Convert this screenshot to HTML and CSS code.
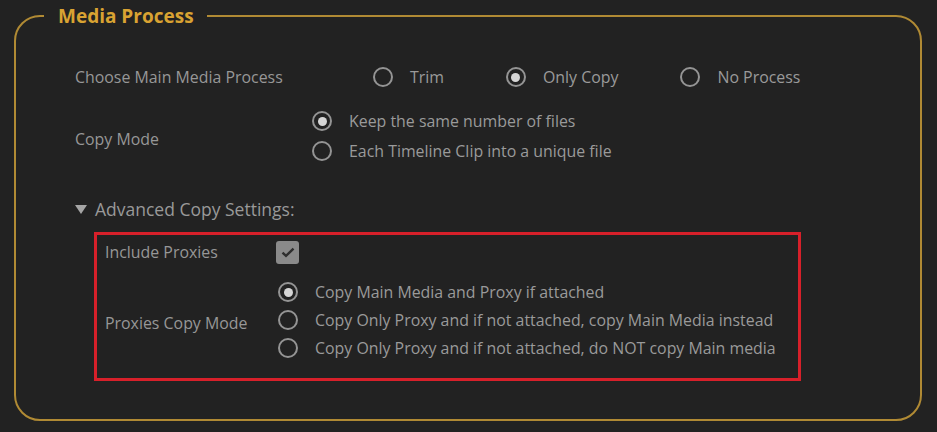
FILE: index.html
```html
<!DOCTYPE html>
<html lang="en">

<head>
    <meta charset="UTF-8">
    <meta name="viewport" content="width=device-width, initial-scale=1.0">
    <title>Media Process</title>
    <link rel="stylesheet" href="styles.css">
</head>

<body>
    <fieldset class="panel">
        <legend>Media Process</legend>

        <div class="main-row">
            <span class="label">Choose Main Media Process</span>
            <div class="radio-line">
                <label class="radio"><span class="dot"></span>Trim</label>
                <label class="radio"><span class="dot on"></span>Only Copy</label>
                <label class="radio"><span class="dot"></span>No Process</label>
            </div>
        </div>

        <div class="copy-row">
            <span class="label copy-label">Copy Mode</span>
            <div class="radio-stack">
                <label class="radio"><span class="dot on"></span>Keep the same number of files</label>
                <label class="radio"><span class="dot"></span>Each Timeline Clip into a unique file</label>
            </div>
        </div>

        <div class="advanced">
            <span class="arrow"></span>Advanced Copy Settings:
        </div>

        <div class="advanced-box">
            <div class="box-row">
                <span class="label">Include Proxies</span>
                <span class="checkbox">
                    <svg width="14" height="11" viewBox="0 0 14 11">
                        <path d="M1.5 5.6 L5 8.9 L12.5 1.6" fill="none" stroke="#2e2e2e" stroke-width="2.4" />
                    </svg>
                </span>
            </div>
            <div class="box-row proxies">
                <span class="label proxies-label">Proxies Copy Mode</span>
                <div class="radio-stack tight">
                    <label class="radio"><span class="dot on"></span>Copy Main Media and Proxy if attached</label>
                    <label class="radio"><span class="dot"></span>Copy Only Proxy and if not attached, copy Main Media instead</label>
                    <label class="radio"><span class="dot"></span>Copy Only Proxy and if not attached, do NOT copy Main media</label>
                </div>
            </div>
        </div>
    </fieldset>
</body>

</html>
```

FILE: styles.css
```css
body {
    margin: 0;
    padding: 4px 15px 0 14px;
    background: #222222;
    font-family: "Open Sans", "Lato", sans-serif;
    font-size: 15.9px;
    color: #9a9a9a;
}

.panel {
    margin: 0;
    height: 417px;
    box-sizing: border-box;
    border: 2px solid #b08a34;
    border-radius: 26px;
    padding: 0 0 0 59px;
}

.panel legend {
    margin-left: -31px;
    padding: 0 13px 0 14px;
    font-size: 19px;
    line-height: 24px;
    font-weight: 700;
    color: #d9a332;
}

.label {
    color: #979797;
}

/* radios */
.radio {
    display: flex;
    align-items: center;
    gap: 17px;
    white-space: nowrap;
}

.dot {
    width: 20px;
    height: 20px;
    box-sizing: border-box;
    border: 2.5px solid #949494;
    border-radius: 50%;
    display: flex;
    align-items: center;
    justify-content: center;
    flex-shrink: 0;
}

.dot.on::after {
    content: "";
    width: 9px;
    height: 9px;
    border-radius: 50%;
    background: #d6d6d6;
}

.main-row {
    display: flex;
    align-items: center;
    height: 30px;
    margin-top: 34px;
}

.main-row .label {
    width: 298px;
}

.radio-line {
    display: flex;
    gap: 62px;
}

.copy-row {
    display: flex;
    margin-top: 14px;
}

.copy-label {
    width: 237px;
    padding-top: 22px;
}

.radio-stack {
    display: flex;
    flex-direction: column;
}

.radio-stack .radio {
    height: 30px;
}

.radio-stack.tight .radio {
    height: 28px;
}

.advanced {
    display: flex;
    align-items: center;
    height: 24px;
    margin-top: 31px;
    color: #999999;
    font-size: 17.5px;
}

.arrow {
    width: 0;
    height: 0;
    border-left: 6px solid transparent;
    border-right: 6px solid transparent;
    border-top: 9px solid #a5a5a5;
    margin-right: 8px;
}

.advanced-box {
    margin: 11px 0 0 19px;
    width: 707px;
    height: 149px;
    box-sizing: border-box;
    border: 3px solid #d7202a;
    padding: 3px 0 0 8px;
}

.box-row {
    display: flex;
    align-items: center;
    height: 28px;
}

.box-row .label {
    width: 171px;
    flex-shrink: 0;
}

.checkbox {
    width: 23px;
    height: 23px;
    border-radius: 3px;
    background: #8a8a8a;
    display: flex;
    align-items: center;
    justify-content: center;
}

.proxies {
    height: auto;
    margin-top: 12px;
}

.proxies-label {
    padding-top: 6px;
}

.proxies .radio-stack {
    margin-left: 2px;
}
```
